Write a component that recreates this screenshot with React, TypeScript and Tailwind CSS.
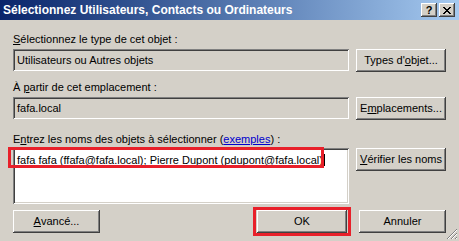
import React from 'react'

const btn =
  'flex items-center justify-center bg-[#d4d0c8] text-black shadow-[inset_-1px_-1px_#404040,inset_1px_1px_#ffffff,inset_-2px_-2px_#808080,inset_2px_2px_#d4d0c8]'
const sunken =
  'shadow-[inset_1px_1px_#808080,inset_-1px_-1px_#ffffff,inset_2px_2px_#404040,inset_-2px_-2px_#d4d0c8]'

const Button = ({ children, className = '' }: { children: React.ReactNode; className?: string }) => (
  <div className={`${btn} h-[23px] w-[90px] ${className}`}>{children}</div>
)

const Grip = () => (
  <svg width="12" height="12" viewBox="0 0 12 12" className="block">
    <path d="M11 1L1 11M11 5L5 11M11 9L9 11" stroke="#808080" strokeWidth="1" />
    <path d="M11 2L2 11M11 6L6 11M11 10L10 11" stroke="#ffffff" strokeWidth="1" />
  </svg>
)

export default function App() {
  return (
    <div
      className="relative flex h-[241px] w-[459px] flex-col overflow-hidden bg-[#d4d0c8] text-[11px] leading-[13px] text-black"
      style={{ fontFamily: '"Liberation Sans", Arial, sans-serif' }}
    >
      {/* title bar */}
      <div className="flex h-[20px] items-center justify-between bg-gradient-to-r from-[#0a246a] to-[#a6caf0] pr-[4px] pl-[3px]">
        <span className="text-[12px] font-bold text-white">
          Sélectionnez Utilisateurs, Contacts ou Ordinateurs
        </span>
        <div className="flex gap-[2px]">
          <div className={`${btn} h-[14px] w-[16px] text-[11px] font-bold leading-none`}>?</div>
          <div className={`${btn} h-[14px] w-[16px]`}>
            <svg width="8" height="7" viewBox="0 0 8 7">
              <path d="M0 0L7 7M1 0L8 7M7 0L0 7M8 0L1 7" stroke="#000" strokeWidth="1" />
            </svg>
          </div>
        </div>
      </div>

      <div className="flex flex-col px-[13px]">
        <div className="mt-[13px] h-[13px]">
          <u>S</u>électionnez le type de cet objet :
        </div>
        <div className="mt-[3px] flex gap-[7px]">
          <div className={`${sunken} flex h-[22px] w-[336px] items-center pl-[4px]`}>
            Utilisateurs ou Autres objets
          </div>
          <Button>
            Types d'<u>o</u>bjet...
          </Button>
        </div>

        <div className="mt-[9px] h-[13px]">
          À <u>p</u>artir de cet emplacement :
        </div>
        <div className="mt-[3px] flex gap-[7px]">
          <div className={`${sunken} flex h-[22px] w-[336px] items-center pl-[4px]`}>fafa.local</div>
          <Button>
            E<u>m</u>placements...
          </Button>
        </div>

        <div className="mt-[13px] h-[13px]">
          E<u>n</u>trez les noms des objets à sélectionner (
          <span className="text-[#0000cc] underline">exemples</span>) :
        </div>
        <div className="mt-[2px] flex gap-[7px]">
          <div className={`${sunken} relative h-[56px] w-[336px] bg-white pt-[4px] pl-[4px]`}>
            <span className="underline">fafa fafa (ffafa@fafa.local); Pierre Dupont (pdupont@fafa.local)</span>
            <span className="ml-[1px] inline-block h-[12px] w-[1px] translate-y-[2px] bg-black" />
            <div className="absolute top-[-1px] left-[-5px] h-[21px] w-[316px] border-[3px] border-[#e8202a]" />
          </div>
          <Button className="h-[22px]">
            <u>V</u>érifier les noms
          </Button>
        </div>

        <div className="mt-[3px] flex items-center">
          <Button className="w-[89px]">
            <u>A</u>vancé...
          </Button>
          <div className="ml-[153px] border-[3px] border-[#e8202a] px-[1px]">
            <Button className="h-[22px] w-[85px]">OK</Button>
          </div>
          <Button className="ml-[8px]">Annuler</Button>
        </div>
      </div>

      <div className="absolute right-[1px] bottom-[1px]">
        <Grip />
      </div>
    </div>
  )
}
